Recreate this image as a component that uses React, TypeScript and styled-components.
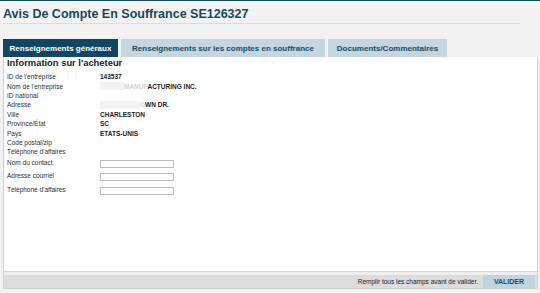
import React from 'react';
import styled, { createGlobalStyle } from 'styled-components';

const GlobalStyle = createGlobalStyle`
  html, body {
    margin: 0;
    padding: 0;
    background: #f2f2f2;
    font-family: "Liberation Sans", Arial, sans-serif;
  }
`;

type Field = {
  label: string;
  value?: string;
  hidden?: number;
  faded?: string;
};

const infoRows: Field[] = [
  { label: "ID de l'entreprise", value: '143537' },
  { label: "Nom de l'entreprise", hidden: 24, faded: 'MANUF', value: 'ACTURING INC.' },
  { label: 'ID national' },
  { label: 'Adresse', hidden: 40, faded: 'O', value: 'WN DR.' },
  { label: 'Ville', value: 'CHARLESTON' },
  { label: 'Province/État', value: 'SC' },
  { label: 'Pays', value: 'ETATS-UNIS' },
  { label: 'Code postal/zip' },
  { label: "Téléphone d'affaires" },
];

const inputRows = ['Nom du contact', 'Adresse courriel', "Téléphone d'affaires"];

const tabs = [
  { label: 'Renseignements généraux', width: 115 },
  { label: 'Renseignements sur les comptes en souffrance', width: 204 },
  { label: 'Documents/Commentaires', width: 119 },
];

const App = () => {
  return (
    <Page>
      <GlobalStyle />
      <TopBar />
      <Title>Avis De Compte En Souffrance SE126327</Title>
      <TabBar>
        {tabs.map((t, i) => (
          <Tab key={t.label} $active={i === 0} $width={t.width}>
            {t.label}
          </Tab>
        ))}
      </TabBar>
      <Panel>
        <Content>
          <SectionTitle>Information sur l'acheteur</SectionTitle>
          <Dash>-</Dash>
          <Rows>
            {infoRows.map((r, i) => (
              <Row key={i}>
                <Label>{r.label}</Label>
                <Value>
                  {r.hidden && <Redacted $width={r.hidden} />}
                  {r.faded && <Faded>{r.faded}</Faded>}
                  {r.value}
                </Value>
              </Row>
            ))}
          </Rows>
          <InputRows>
            {inputRows.map((l) => (
              <InputRow key={l}>
                <Label>{l}</Label>
                <TextBox />
              </InputRow>
            ))}
          </InputRows>
        </Content>
        <Footer>
          <Hint>Remplir tous les champs avant de valider.</Hint>
          <SubmitBtn>VALIDER</SubmitBtn>
        </Footer>
      </Panel>
    </Page>
  );
};

const Page = styled.div`
  width: 540px;
  height: 293px;
  overflow: hidden;
  display: flex;
  flex-direction: column;
`;

const TopBar = styled.div`
  height: 2px;
  background: #0f4660;
`;

const Title = styled.h1`
  margin: 6px 20px 0 3px;
  padding-bottom: 2px;
  font-size: 12.5px;
  line-height: 14px;
  font-weight: bold;
  color: #1a4860;
  border-bottom: 1px solid #dcdcdc;
`;

const TabBar = styled.div`
  display: flex;
  gap: 3px;
  margin: 15px 0 0 3px;
`;

const Tab = styled.div<{ $active?: boolean; $width: number }>`
  width: ${(p) => p.$width}px;
  height: 18px;
  display: flex;
  align-items: center;
  justify-content: center;
  font-size: 8px;
  font-weight: bold;
  color: ${(p) => (p.$active ? '#ffffff' : '#1d4a60')};
  background: ${(p) => (p.$active ? '#0f4763' : '#c4d6df')};
`;

const Panel = styled.div`
  margin: 0 2px 4px 3px;
  flex: 1;
  border: 1px solid #d0d0d0;
  border-top: none;
  background: #eeeeee;
  display: flex;
  flex-direction: column;
`;

const Content = styled.div`
  position: relative;
  height: 214px;
  background: #ffffff;
  border-bottom: 1px solid #d6d6d6;
  padding: 0 0 0 3px;
`;

const SectionTitle = styled.div`
  font-size: 9.4px;
  font-weight: bold;
  color: #222;
  margin-top: 0;
  line-height: 11px;
`;

const Dash = styled.span`
  position: absolute;
  left: 268px;
  top: 2px;
  font-size: 6px;
  color: #bbb;
`;

const Rows = styled.div`
  margin-top: 4px;
  display: flex;
  flex-direction: column;
`;

const Row = styled.div`
  display: flex;
  align-items: center;
  height: 9.4px;
`;

const Label = styled.div`
  width: 93px;
  font-size: 6.5px;
  color: #1f2f3a;
  white-space: nowrap;
`;

const Value = styled.div`
  display: flex;
  align-items: center;
  font-size: 6.5px;
  font-weight: bold;
  color: #222;
  white-space: nowrap;
`;

const Redacted = styled.span<{ $width: number }>`
  display: inline-block;
  width: ${(p) => p.$width}px;
  height: 8px;
  background: #f3f3f3;
`;

const Faded = styled.span`
  color: #d4d0d0;
`;

const InputRows = styled.div`
  display: flex;
  flex-direction: column;
  gap: 5.5px;
  margin-top: 3px;
`;

const InputRow = styled.div`
  display: flex;
  align-items: center;
  height: 8px;

  ${Label} {
    margin-top: -3px;
  }
`;

const TextBox = styled.div`
  width: 72px;
  height: 6px;
  border: 1px solid #bdbdbd;
  background: #fff;
`;

const Footer = styled.div`
  margin-top: 3px;
  height: 13px;
  background: #dcdcdc;
  display: flex;
  justify-content: flex-end;
  align-items: center;
  gap: 5px;
  padding-right: 2px;
`;

const Hint = styled.span`
  font-size: 6.5px;
  color: #222;
`;

const SubmitBtn = styled.button`
  width: 52px;
  height: 13px;
  padding: 0;
  border: none;
  background: #c0d4de;
  color: #1d4a68;
  font-family: "Liberation Sans", Arial, sans-serif;
  font-size: 7px;
  font-weight: bold;
`;

export default App;
